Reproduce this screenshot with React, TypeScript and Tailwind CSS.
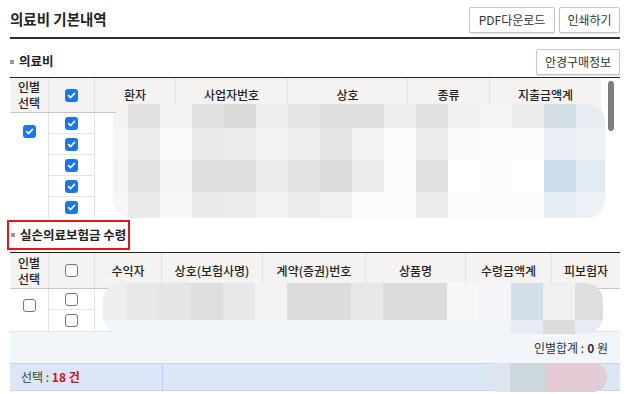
import React from "react";

const FONT = { fontFamily: '"Noto Sans CJK KR", "Noto Sans", sans-serif' };

const Check = ({ on }: { on?: boolean }) =>
  on ? (
    <span className="inline-flex h-[13px] w-[13px] items-center justify-center rounded-[3px] bg-[#1a76f0]">
      <svg width="9" height="9" viewBox="0 0 10 10">
        <path d="M1.8 5.2 L4 7.3 L8.3 2.6" stroke="#fff" strokeWidth="1.8" fill="none" strokeLinecap="round" strokeLinejoin="round" />
      </svg>
    </span>
  ) : (
    <span className="inline-block h-[13px] w-[13px] rounded-[3px] border border-[#767676] bg-white" />
  );

const Btn = ({ children, className }: { children: React.ReactNode; className?: string }) => (
  <button className={"h-[26px] rounded-[2px] border border-[#c6c6c6] bg-white text-[12px] text-[#333] shadow-[0_1px_1px_rgba(0,0,0,0.12)] " + (className || "")}>
    {children}
  </button>
);

const SectionTitle = ({ children }: { children: React.ReactNode }) => (
  <div className="flex items-center gap-[5px] text-[12.5px] font-bold text-[#222]">
    <span className="h-[4px] w-[4px] bg-[#9a9a9a]" />
    {children}
  </div>
);

type Blob = { left: number; top: number; cols: number[]; rows: { h: number; c: string[] }[]; r?: string };

// redacted (pixelated) areas laid over the table bodies
const Blur = ({ b }: { b: Blob }) => (
  <div
    className={"absolute flex flex-col overflow-hidden blur-[0.6px] " + (b.r || "rounded-[18px]")}
    style={{ left: b.left, top: b.top }}
  >
    {b.rows.map((row, i) => (
      <div key={i} className="flex" style={{ height: row.h }}>
        {b.cols.map((w, j) => (
          <div key={j} style={{ width: w, background: row.c[j] }} />
        ))}
      </div>
    ))}
  </div>
);

const blob1: Blob = {
  left: 113,
  top: 104,
  cols: [15, 32, 32, 32, 32, 32, 32, 32, 32, 32, 32, 32, 32, 32, 32, 29],
  rows: [
    { h: 24, c: ["#f3f3f3", "#e0e0e0", "#f3f3f3", "#e0e0e0", "#dadada", "#efefef", "#e6e6e6", "#dedede", "#dedede", "#efefef", "#e0e0e0", "#f0f0f0", "#f5f5f3", "#ececec", "#d3dde4", "#e6ecf2"] },
    { h: 32, c: ["#f7f7f7", "#ececec", "#fafafa", "#eaeaea", "#ececec", "#f3f3f3", "#eeeeee", "#e6e6e6", "#f3f3f3", "#fbfbfb", "#ebebeb", "#fafafa", "#fbfbfb", "#fbfbfb", "#e8eef4", "#eef2f7"] },
    { h: 32, c: ["#f5f5f5", "#e2e2e2", "#f4f4f4", "#dedede", "#dedede", "#ebebeb", "#e3e3e3", "#dcdcdc", "#ececec", "#fcfcfc", "#e0e0e0", "#ffffff", "#fbfbfb", "#ffffff", "#cbdde9", "#e2eaf2"] },
    { h: 26, c: ["#f7f7f7", "#eaeaea", "#f6f6f6", "#eaeaea", "#ebebeb", "#f2f2f2", "#ececec", "#f0f0f0", "#fbfbfb", "#fbfbfb", "#ececec", "#fbfbfb", "#fbfbfb", "#fbfbfb", "#e4ecf4", "#eef2f8"] },
  ],
};

const blob2: Blob = {
  left: 103,
  top: 283,
  cols: [24, 32, 32, 32, 32, 32, 32, 32, 32, 32, 32, 32, 32, 32, 32, 28],
  rows: [
    { h: 37, c: ["#eeeeee", "#e8e8e8", "#e6e6e6", "#dedede", "#e8e8e8", "#f3f3f3", "#dcdcdc", "#dcdcdc", "#e8e8e8", "#dcdcdc", "#dcdcdc", "#f7f7f7", "#f3f5f8", "#d4e0e9", "#f0f0f0", "#dedede"] },
    { h: 14, c: ["#f1f4f8", "#f1f4f8", "#f1f4f8", "#f1f4f8", "#f1f4f8", "#f1f4f8", "#f1f4f8", "#f1f4f8", "#f1f4f8", "#f1f4f8", "#f1f4f8", "#f1f4f8", "#f1f4f8", "#e8ecf2", "#dcdcdc", "#e8ecf2"] },
  ],
};

const blob3: Blob = {
  left: 485,
  top: 363,
  cols: [25, 35, 62],
  rows: [{ h: 29, c: ["#dde6f0", "#cdd8de", "#e3ccd6"] }],
  r: "rounded-[14px]",
};

const th = "flex items-center justify-center border-r border-[#e2e2e2] text-[12px] font-medium text-[#222]";

export default function App() {
  const t1 = [
    { w: 81, t: "환자" },
    { w: 112, t: "사업자번호" },
    { w: 120, t: "상호" },
    { w: 82, t: "종류" },
    { w: 111, t: "지출금액계" },
  ];
  const t2 = [
    { w: 67, t: "수익자" },
    { w: 101, t: "상호(보험사명)" },
    { w: 103, t: "계약(증권)번호" },
    { w: 100, t: "상품명" },
    { w: 86, t: "수령금액계" },
    { w: 68, t: "피보험자" },
  ];

  return (
    <div className="relative h-[394px] w-[627px] overflow-hidden bg-white px-[10px] pr-[7px] text-[#333]" style={FONT}>
      {/* top title */}
      <div className="flex h-[37px] items-center justify-between pt-[1px]">
        <div className="text-[14.5px] font-bold text-[#222]">의료비 기본내역</div>
        <div className="flex gap-[4px] pt-[1px]">
          <Btn className="w-[86px]">PDF다운로드</Btn>
          <Btn className="w-[61px]">인쇄하기</Btn>
        </div>
      </div>
      <div className="h-[2px] bg-[#2e2e2e]" />

      {/* section 1 */}
      <div className="flex h-[38px] items-center justify-between pt-[7px]">
        <SectionTitle>의료비</SectionTitle>
        <Btn className="w-[84px]">안경구매정보</Btn>
      </div>
      <div className="border-t border-[#222]">
        <div className="flex">
          <div className="w-[591px]">
            <div className="flex h-[34px] bg-[#f4f3f2]">
              <div className={th + " w-[39px] flex-col leading-[16px]"}>
                <span>인별</span>
                <span>선택</span>
              </div>
              <div className={th + " w-[46px]"}>
                <Check on />
              </div>
              {t1.map((c, i) => (
                <div key={c.t} className={th + (i === t1.length - 1 ? " border-r-0" : "")} style={{ width: c.w }}>
                  {c.t}
                </div>
              ))}
            </div>
            <div className="flex border-t border-[#c4c4c4]">
              <div className="flex w-[39px] justify-center border-r border-[#e2e2e2] pt-[4px]">
                <div className="h-[13px]">
                  <Check on />
                </div>
              </div>
              <div className="w-[46px] border-r border-[#e2e2e2]">
                {[0, 1, 2, 3, 4].map((i) => (
                  <div key={i} className="flex h-[21px] items-center justify-center border-b border-[#e4e4e4] last:border-b-0">
                    <Check on />
                  </div>
                ))}
              </div>
              <div className="flex-1" />
            </div>
          </div>
          <div className="flex w-[19px] justify-center pt-[3px]">
            <div className="h-[50px] w-[6px] rounded-full bg-[#7d7d7d]" />
          </div>
        </div>
      </div>

      {/* section 2 */}
      <div className="flex h-[34px] items-center">
        <div className="-ml-[3px] flex h-[30px] w-[123px] items-center border-2 border-[#e8141c] pl-[2px]">
          <SectionTitle>실손의료보험금 수령</SectionTitle>
        </div>
      </div>
      <div className="border-t border-[#222]">
        <div className="flex h-[35px] bg-[#f4f3f2]">
          <div className={th + " w-[39px] flex-col leading-[16px]"}>
            <span>인별</span>
            <span>선택</span>
          </div>
          <div className={th + " w-[46px]"}>
            <Check />
          </div>
          {t2.map((c, i) => (
            <div key={c.t} className={th + (i === t2.length - 1 ? " border-r-0" : "")} style={{ width: c.w }}>
              {c.t}
            </div>
          ))}
        </div>
        <div className="flex border-t border-[#c4c4c4]">
          <div className="flex w-[39px] justify-center border-r border-[#e2e2e2] pt-[4px]">
            <div className="h-[13px]">
              <Check />
            </div>
          </div>
          <div className="w-[46px] border-r border-[#e2e2e2]">
            {[0, 1].map((i) => (
              <div key={i} className="flex h-[21px] items-center justify-center border-b border-[#e4e4e4] last:border-b-0">
                <Check />
              </div>
            ))}
          </div>
          <div className="flex-1" />
        </div>
      </div>
      <div className="flex h-[32px] items-center justify-end border-t border-[#dfe6ef] bg-[#f2f6fb] pr-[12px] text-[12px] text-[#333]">
        인별합계 : <b className="ml-[3px] font-bold">0</b>&nbsp;원
      </div>
      <div className="flex h-[28px] border-y border-[#c8d6e8] bg-[#dbe7f6] text-[12px]">
        <div className="flex w-[153px] items-center border-r border-[#bccde3] pl-[11px]">
          <span className="text-[#2c4a2c]">선택 :&nbsp;</span>
          <span className="font-bold text-[#d0111b]">18 건</span>
        </div>
        <div className="flex-1" />
      </div>

      <Blur b={blob1} />
      <Blur b={blob2} />
      <Blur b={blob3} />
    </div>
  );
}
